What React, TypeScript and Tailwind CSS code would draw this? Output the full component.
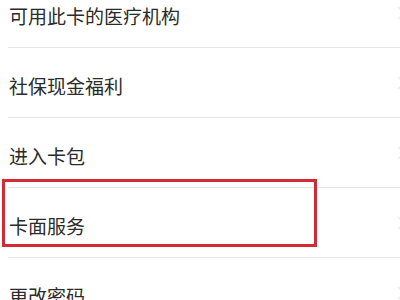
import React from "react";

const items = ["可用此卡的医疗机构", "社保现金福利", "进入卡包", "卡面服务", "更改密码"];

function Chevron() {
  return (
    <svg className="absolute right-[-6px] top-1/2 -translate-y-1/2" width="10" height="16" viewBox="0 0 10 16" fill="none">
      <path d="M2 2 L8 8 L2 14" stroke="#ececec" strokeWidth="1.5" />
    </svg>
  );
}

export default function App() {
  return (
    <div
      className="relative w-[400px] h-[300px] overflow-hidden bg-white"
      style={{ fontFamily: '"Noto Sans CJK SC", "Noto Sans", sans-serif' }}
    >
      <div className="-mt-[22px] flex flex-col">
        {items.map((t, i) => (
          <div key={t} className="relative h-[70px] pl-[9px]">
            <div className="flex h-[70px] items-center pt-[4px] text-[19px] leading-none text-[#2b2b2b]">
              {t}
            </div>
            <Chevron />
            {i < items.length - 1 && (
              <div className="absolute bottom-0 left-[8px] right-0 h-px bg-[#e6e6e6]" />
            )}
          </div>
        ))}
      </div>
      <div className="absolute left-[2px] top-[179px] h-[68px] w-[315px] border-[3px] border-[#d42a36]" />
    </div>
  );
}
